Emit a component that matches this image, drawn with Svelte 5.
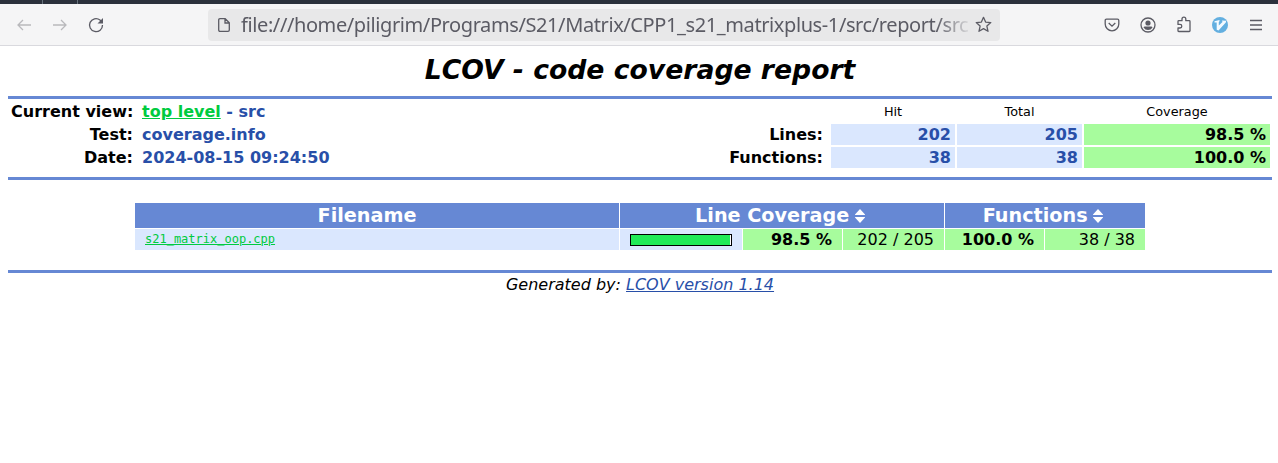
<script>
  const details = [
    { label: 'Test:', value: 'coverage.info' },
    { label: 'Date:', value: '2024-08-15 09:24:50' }
  ];
  const summary = [
    { label: 'Lines:', hit: 202, total: 205, rate: '98.5 %' },
    { label: 'Functions:', hit: 38, total: 38, rate: '100.0 %' }
  ];
  const coverage = 98.5;
</script>

{#snippet sorter()}
  <svg class="sort" width="10" height="14" viewBox="0 0 10 14"><path d="M0 5.500 5 0l5 5.500v.5H0zM0 8h10v.5L5 14 0 8.500z" fill="#fff" /></svg>
{/snippet}

<div class="strip"><i></i><i></i></div>
<header>
  <nav>
    <svg class="dim" width="16" height="16" viewBox="0 0 16 16"><path d="M15 8H2M7 3 2 8l5 5" /></svg>
    <svg class="dim" width="16" height="16" viewBox="0 0 16 16"><path d="M1 8h13M9 3l5 5-5 5" /></svg>
    <svg width="16" height="16" viewBox="0 0 16 16"><path d="M14.500 8A6.500 6.500 0 1 1 12 3l1.500 1.500" /><path d="M15 1v5.500H9.500z" fill="#5b5b64" stroke="none" /></svg>
  </nav>
  <div class="address">
    <svg width="12" height="14" viewBox="0 0 12 14"><path d="M2 .7h5.200l4.100 4.100V12q0 1.300-1.300 1.300H2Q.7 13.300.7 12V2Q.7.7 2 .7zM7 1v4h4" /></svg>
    <span class="url">file:///home/piligrim/Programs/S21/Matrix/CPP1_s21_matrixplus-1/src/report/src</span>
    <svg width="17" height="17" viewBox="0 0 17 17"><path d="m8.500 1.300 2.100 4.800 5.200.5-3.900 3.500 1.100 5.200-4.500-2.700L4 15.300l1.100-5.200L1.200 6.600l5.200-.5z" stroke-linejoin="round" /></svg>
  </div>
  <div class="tools">
    <svg width="16" height="16" viewBox="0 0 16 16"><path d="M2.500 2.200h11q1.300 0 1.300 1.300V7a6.800 6.800 0 0 1-13.600 0V3.500q0-1.300 1.300-1.300zM4.700 6 8 9.200 11.300 6" /></svg>
    <svg width="16" height="16" viewBox="0 0 16 16"><circle cx="8" cy="8" r="7" /><circle cx="8" cy="6" r="2.600" fill="#5b5b64" stroke="none" /><path d="M3.500 10.500q.3-1 1.300-1h6.400q1 0 1.300 1Q11 13 8 13t-4.500-2.500z" fill="#5b5b64" stroke="none" /></svg>
    <svg width="16" height="17" viewBox="0 0 16 17"><path d="M2 8V5.500q0-.8.800-.8H6V3a1.900 1.900 0 0 1 3.800 0v1.700h3.400q.8 0 .8.800v9.200q0 .8-.8.800H2.800q-.8 0-.8-.8V12h2a1.800 1.800 0 0 0 0-3.600H2z" stroke-linejoin="round" /></svg>
    <svg width="16" height="16" viewBox="0 0 16 16"><circle cx="8" cy="8" r="8" fill="#63afe0" stroke="none" /><path d="M2.500 4.200 7.500 3v1.300l-.7.700v3.500L10.500 5 10 3.500l4 .3v1.500L6.500 13.500l-1.800-.7V5.500H2.500z" fill="#f4faff" stroke="none" /></svg>
    <svg width="16" height="16" viewBox="0 0 16 16"><path d="M2 3.500h12M2 8h12M2 12.500h12" /></svg>
  </div>
</header>

<main>
  <h1>LCOV - code coverage report</h1>
  <section class="overview">
    <dl>
      <dt>Current view:</dt>
      <dd><a class="green" href="#top">top level</a> - src</dd>
      {#each details as row}
        <dt>{row.label}</dt>
        <dd>{row.value}</dd>
      {/each}
    </dl>
    <div class="summary">
      <span></span><span class="cap">Hit</span><span class="cap">Total</span><span class="cap">Coverage</span>
      {#each summary as row}
        <b class="name">{row.label}</b>
        <b class="count">{row.hit}</b>
        <b class="count">{row.total}</b>
        <b class="rate">{row.rate}</b>
      {/each}
    </div>
  </section>

  <div class="files">
    <div class="head first">Filename</div>
    <div class="head three">Line Coverage {@render sorter()}</div>
    <div class="head two">Functions {@render sorter()}</div>
    <div class="file"><a class="green" href="#file">s21_matrix_oop.cpp</a></div>
    <div class="bar"><div class="track"><div class="fill" style:width="{coverage}%"></div></div></div>
    <div class="good"><b>98.5 %</b></div>
    <div class="good">202 / 205</div>
    <div class="good"><b>100.0 %</b></div>
    <div class="good">38 / 38</div>
  </div>
  <footer>Generated by: <a href="#lcov">LCOV version 1.14</a></footer>
</main>

<style>
  :global(body) {
    background: #fff;
    color: #000;
    font: 16px/20px "DejaVu Sans", sans-serif;
  }
  .strip {
    height: 4px;
    background: #2b313c;
    display: flex;
    gap: 34px;
    padding-left: 42px;
  }
  .strip i { width: 1px; background: #66717b; }
  header {
    box-sizing: border-box;
    height: 42px;
    display: flex;
    align-items: center;
    background: #f5f5f6;
    border-bottom: 1px solid #d9d9de;
  }
  header svg {
    flex: none;
    fill: none;
    stroke: #5b5b64;
    stroke-width: 1.3;
  }
  header svg.dim { stroke: #b9b9bc; }
  nav {
    display: flex;
    gap: 20px;
    width: 192px;
    padding-left: 16px;
  }
  .address {
    box-sizing: border-box;
    width: 792px;
    height: 32px;
    padding: 0 7px 0 10px;
    border-radius: 4px;
    background: #e8e8e9;
    display: flex;
    align-items: center;
  }
  .url {
    width: 729px;
    margin: 1px 5px 0 11px;
    white-space: nowrap;
    font: 20px/30px "Noto Sans", sans-serif;
    letter-spacing: -0.4px;
    color: #5b5b64;
    mask-image: linear-gradient(to right, #000 695px, transparent 732px);
  }
  .tools {
    display: flex;
    align-items: center;
    gap: 20px;
    margin-left: 104px;
  }
  main { padding: 0 6px 0 8px; }
  h1 {
    margin: 0;
    height: 50px;
    text-align: center;
    font: italic bold 26.667px/48px "DejaVu Sans", sans-serif;
  }
  .overview {
    box-sizing: border-box;
    height: 84px;
    border-top: 3px solid #6688d4;
    border-bottom: 3px solid #6688d4;
    display: flex;
    justify-content: space-between;
    padding: 2px 2px 0 3px;
  }
  dl {
    margin: 0;
    display: grid;
    grid-template-columns: 122px auto;
    grid-auto-rows: 21px;
    gap: 2px 9px;
    height: 67px;
    font-weight: bold;
    line-height: 21px;
  }
  dt { text-align: right; white-space: nowrap; }
  dd { margin: 0; color: #284fa8; }
  a { color: #284fa8; }
  a.green { color: #00cb40; }
  .summary {
    display: grid;
    grid-template-columns: 120px 124px 125px 186px;
    grid-auto-rows: 21px;
    gap: 2px;
    height: 67px;
    line-height: 21px;
    text-align: right;
  }
  .cap { font-size: 12.800px; text-align: center; }
  .name { padding-right: 6px; }
  .count { background: #dae7fe; color: #284fa8; padding-right: 4px; }
  .rate { background: #a7fc9d; padding-right: 4px; }
  .files {
    width: 1010px;
    margin: 23px auto 20px;
    display: grid;
    grid-template-columns: 484px 122px 99px 101px 99px 100px;
    grid-template-rows: 25px 21px;
    gap: 1px;
    line-height: 21px;
  }
  .head {
    background: #6688d4;
    color: #fff;
    text-align: center;
    font: bold 19.200px/25px "DejaVu Sans", sans-serif;
  }
  .first { padding-right: 20px; }
  .three { grid-column: span 3; padding-right: 4px; }
  .two { grid-column: span 2; padding-right: 4px; }
  .sort { vertical-align: -1px; overflow: visible; margin-left: -1px; }
  .file {
    background: #dae7fe;
    padding-left: 10px;
    font: 12px/21px "DejaVu Sans Mono", monospace;
  }
  .bar {
    background: #dae7fe;
    display: grid;
    place-items: center;
  }
  .track {
    width: 100px;
    height: 10px;
    border: 1px solid #000;
    background: #fff;
  }
  .fill { height: 10px; background: #20ea57; }
  .good { background: #a7fc9d; text-align: right; padding-right: 10px; }
  footer {
    border-top: 3px solid #6688d4;
    text-align: center;
    font-style: italic;
    line-height: 23px;
  }
</style>
